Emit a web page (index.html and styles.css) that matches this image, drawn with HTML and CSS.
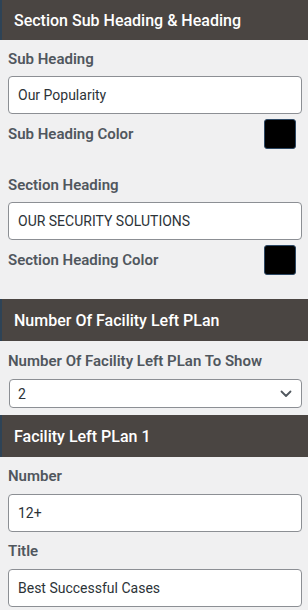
FILE: index.html
```html
<!DOCTYPE html>
<html>
<head>
<meta charset="utf-8">
<link rel="stylesheet" href="styles.css">
</head>
<body>
<div class="panel">
  <div class="section-head head-1">Section Sub Heading &amp; Heading</div>
  <div class="panel-body body-1">
    <div class="group">
      <div class="field">
        <label class="label">Sub Heading</label>
        <div class="input">Our Popularity</div>
      </div>
      <div class="color-row">
        <span class="label">Sub Heading Color</span>
        <span class="swatch"></span>
      </div>
    </div>
    <div class="group">
      <div class="field">
        <label class="label">Section Heading</label>
        <div class="input">OUR SECURITY SOLUTIONS</div>
      </div>
      <div class="color-row">
        <span class="label">Section Heading Color</span>
        <span class="swatch"></span>
      </div>
    </div>
  </div>

  <div class="section-head head-2">Number Of Facility Left PLan</div>
  <div class="panel-body body-2">
    <div class="field field-wide">
      <label class="label">Number Of Facility Left PLan To Show</label>
      <div class="select">
        <span>2</span>
        <svg class="chevron" width="12" height="8" viewBox="0 0 12 8"><path d="M1.5 1.5 L6 6 L10.5 1.5" fill="none" stroke="#50575e" stroke-width="1.8" stroke-linecap="round" stroke-linejoin="round"/></svg>
      </div>
    </div>
  </div>

  <div class="section-head head-3">Facility Left PLan 1</div>
  <div class="panel-body body-3">
    <div class="field field-wide">
      <label class="label">Number</label>
      <div class="input">12+</div>
    </div>
    <div class="field field-wide">
      <label class="label">Title</label>
      <div class="input">Best Successful Cases</div>
    </div>
  </div>
</div>
</body>
</html>
```

FILE: styles.css
```css
html, body {
  margin: 0;
  padding: 0;
  background: #f0f0f1;
  font-family: Roboto, "Liberation Sans", sans-serif;
}

.panel {
  display: flex;
  flex-direction: column;
}

.section-head {
  display: flex;
  align-items: center;
  background: #4a4542;
  color: #ffffff;
  font-size: 16px;
  font-weight: 500;
  padding-left: 12px;
  border-left: 2px solid #2e4356;
  height: 42px;
  box-sizing: border-box;
}

.head-1 {
  height: 40px;
}

.panel-body {
  display: flex;
  flex-direction: column;
  padding: 9px 6px 0 8px;
}

.body-1 {
  padding-bottom: 24px;
  gap: 26px;
}

.body-2 {
  padding-top: 10px;
  padding-bottom: 7px;
}

.body-3 {
  gap: 9px;
}

.group {
  display: flex;
  flex-direction: column;
  gap: 5px;
}

.field {
  display: flex;
  flex-direction: column;
  gap: 7px;
}

.field-wide {
  gap: 8px;
}

.label {
  font-size: 15px;
  line-height: 20px;
  font-weight: 600;
  color: #50575e;
}

.input {
  height: 38px;
  box-sizing: border-box;
  background: #ffffff;
  border: 1px solid #8c8f94;
  border-radius: 4px;
  padding: 0 9px;
  display: flex;
  align-items: center;
  font-size: 14px;
  color: #2c3338;
}

.color-row {
  display: flex;
  align-items: center;
  justify-content: space-between;
  padding-right: 6px;
}

.swatch {
  width: 32px;
  height: 30px;
  box-sizing: border-box;
  background: #000000;
  border: 1px solid #2c4763;
  border-radius: 3px;
}

.select {
  height: 29px;
  box-sizing: border-box;
  margin-left: 1px;
  background: #ffffff;
  border: 1px solid #8c8f94;
  border-radius: 4px;
  padding: 0 9px 0 8px;
  display: flex;
  align-items: center;
  justify-content: space-between;
  font-size: 14px;
  color: #2c3338;
}

.chevron {
  display: block;
}
```
